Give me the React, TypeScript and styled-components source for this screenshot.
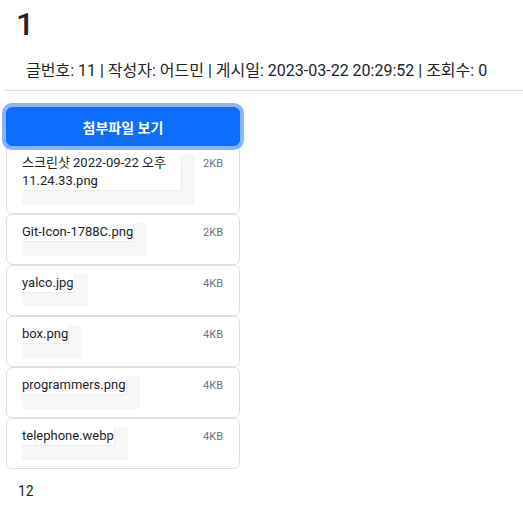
import React from "react";
import styled, { createGlobalStyle } from "styled-components";

const GlobalStyle = createGlobalStyle`
  body {
    margin: 0;
    background: #fff;
    color: #212529;
    font-family: "Roboto", "Noto Sans CJK KR", sans-serif;
  }
`;

interface IFile {
  name: string;
  size: string;
}

const files: IFile[] = [
  { name: "스크린샷 2022-09-22 오후 11.24.33.png", size: "2KB" },
  { name: "Git-Icon-1788C.png", size: "2KB" },
  { name: "yalco.jpg", size: "4KB" },
  { name: "box.png", size: "4KB" },
  { name: "programmers.png", size: "4KB" },
  { name: "telephone.webp", size: "4KB" },
];

function App(): React.ReactElement {
  return (
    <>
      <GlobalStyle />
      <Wrapper>
        <Title>1</Title>
        <Meta>
          글번호: 11 | 작성자: 어드민 | 게시일: 2023-03-22 20:29:52 | 조회수: 0
        </Meta>
        <Divider />
        <Attach>
          <AttachButton type="button">첨부파일 보기</AttachButton>
          <FileList>
            {files.map(file => (
              <FileItem key={file.name}>
                <NameBox>
                  <Name>{file.name}</Name>
                </NameBox>
                <Size>{file.size}</Size>
              </FileItem>
            ))}
          </FileList>
        </Attach>
        <Content>12</Content>
      </Wrapper>
    </>
  );
}

export default App;

const Wrapper = styled.div`
  display: flex;
  flex-direction: column;
  padding-left: 6px;
`;

const Title = styled.h1`
  margin: 0;
  padding: 5px 0 0 10px;
  font-size: 32px;
  font-weight: 500;
  line-height: 38px;
`;

const Meta = styled.div`
  margin-top: 16px;
  padding-left: 20px;
  font-size: 16px;
  line-height: 24px;
`;

const Divider = styled.hr`
  margin: 7px 0 0 -1px;
  border: 0;
  border-top: 1px solid #dcdcdc;
`;

const Attach = styled.div`
  width: 234px;
  margin-top: 16px;
  display: flex;
  flex-direction: column;
`;

const AttachButton = styled.button`
  height: 39px;
  border: 1px solid #0d6efd;
  border-radius: 6px;
  background: #0d6efd;
  color: #fff;
  font-family: inherit;
  font-size: 14px;
  font-weight: 700;
  box-shadow: 0 0 0 4px rgba(13, 110, 253, 0.5);
  position: relative;
  z-index: 1;
`;

const FileList = styled.div`
  display: flex;
  flex-direction: column;
  margin-top: -1px;
`;

const FileItem = styled.div`
  display: flex;
  justify-content: space-between;
  align-items: flex-start;
  gap: 8px;
  padding: 8px 16px 8px 15px;
  border: 1px solid #dfdfdf;
  border-radius: 6px;
  background: #fff;
`;

const NameBox = styled.div`
  background: #f7f7f7;
  padding: 0 14px 15px 0;
`;

const Name = styled.div`
  background: #fff;
  font-size: 13px;
  line-height: 18px;
  box-shadow: 1px 1px 0 #ececec;
`;

const Size = styled.div`
  flex-shrink: 0;
  margin-top: 3px;
  font-size: 11px;
  color: #6c757d;
`;

const Content = styled.div`
  margin-top: 12px;
  padding-left: 12px;
  font-size: 14px;
  line-height: 20px;
`;
